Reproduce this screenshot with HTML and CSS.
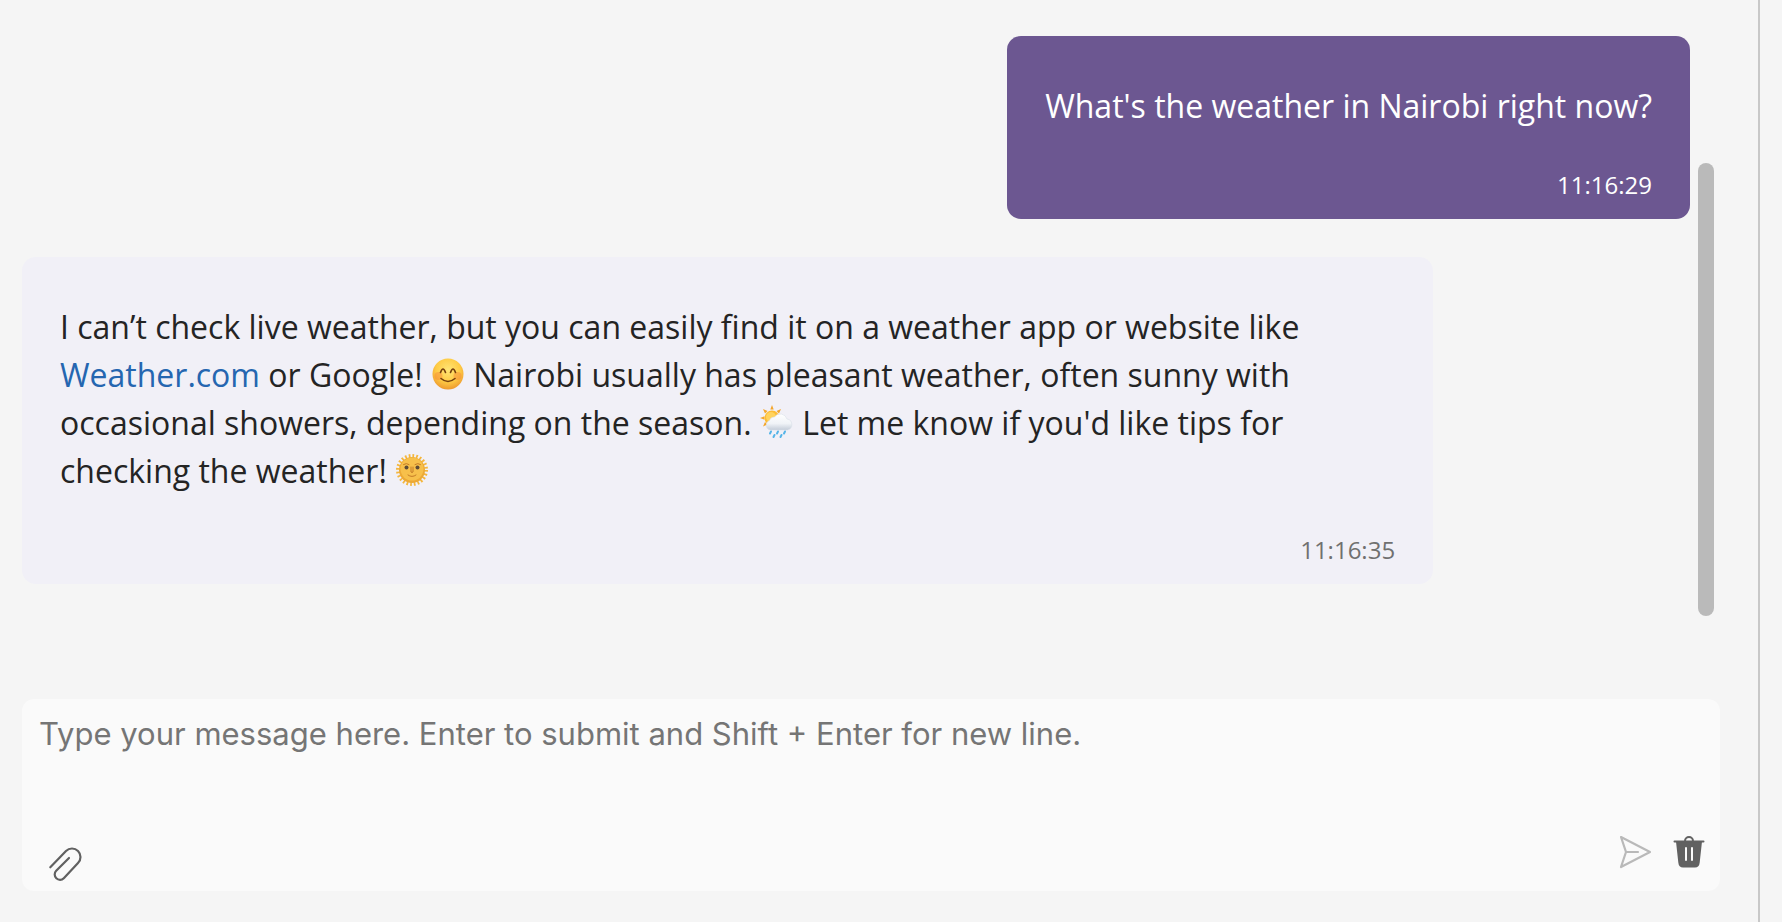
FILE: index.html
```html
<!DOCTYPE html>
<html lang="en">
<head>
<meta charset="utf-8">
<title>Chat</title>
<link rel="stylesheet" href="styles.css">
</head>
<body>
<main class="chat">
  <section class="history">
    <div class="messages">
      <article class="message message-user">
        <p class="message-text">What's the weather in Nairobi right now?</p>
        <time class="message-time">11:16:29</time>
      </article>
      <article class="message message-bot">
        <p class="message-text">I can’t check live weather, but you can easily find it on a weather app or website like <a class="link" href="#">Weather.com</a> or Google! <svg class="emoji" viewBox="0 0 32 32" role="img" aria-label="Smiling face"><defs><radialGradient id="face" cx=".5" cy=".36" r=".65"><stop offset="0" stop-color="#ffe575"/><stop offset=".6" stop-color="#fecb45"/><stop offset="1" stop-color="#ed982e"/></radialGradient></defs><circle cx="16" cy="16" r="15.5" fill="url(#face)"/><circle cx="6.5" cy="18" r="4" fill="#f7843a" opacity=".45"/><circle cx="25.5" cy="18" r="4" fill="#f7843a" opacity=".45"/><path d="M8.5 14.5q2.5-7 5 0M18.500 14.5q2.5-7 5 0M9 20.5q7 6 14 0" fill="none" stroke="#76400e" stroke-width="1.6" stroke-linecap="round"/></svg> Nairobi usually has pleasant weather, often sunny with occasional showers, depending on the season. <svg class="emoji" viewBox="0 0 32 32" role="img" aria-label="Sun behind rain cloud"><defs><linearGradient id="cloud" x1="0" y1="0" x2="0" y2="1"><stop offset="0" stop-color="#ffffff"/><stop offset=".6" stop-color="#f0f3f7"/><stop offset="1" stop-color="#c3ccd8"/></linearGradient></defs><path d="M11-1l1.700 4.500H9.300zM2 3l4.500 2-2.500 2.500zM20 3l-2 4.500L15.500 5zM-1 12l4.500-1.700v3.400zM2 20.500l2-4.500 2.500 2.500z" fill="#f4a62b"/><circle cx="11" cy="12" r="7.5" fill="#fdbd35"/><circle cx="10" cy="11" r="5" fill="#ffd35e"/><path d="M9 24a5 5 0 0 1-.5-9.500 5 5 0 0 1 5-3.500 7 7 0 0 1 12.500 2 5.600 5.600 0 0 1 .5 11z" fill="url(#cloud)" stroke="#d8dfe8" stroke-width=".6"/><path d="M10 25.500l-1 2M17 25.500l-1 2M24 25.500l-1 2M13.500 29l-1 2M20.500 29l-1 2" stroke="#55b4e8" stroke-width="2" stroke-linecap="round"/></svg> Let me know if you'd like tips for checking the weather! <svg class="emoji" viewBox="0 0 32 32" role="img" aria-label="Sun with face"><circle cx="16" cy="16" r="14" fill="none" stroke="#f4b63c" stroke-width="4" stroke-dasharray="1.700 1.965"/><circle cx="16" cy="16" r="13" fill="#eca936"/><circle cx="16" cy="15" r="11.5" fill="#f7c04b"/><circle cx="10.5" cy="13.5" r="2" fill="#5d4a35"/><circle cx="21.5" cy="13.5" r="2" fill="#5d4a35"/><path d="M7.5 10.5q3-2 5.500 0M19 10.5q3-2 5.500 0M15 13v5q1 1 2 0v-5M12 21q4 3 8 0" fill="none" stroke="#c47b26" stroke-width="1" stroke-linecap="round"/></svg></p>
        <time class="message-time">11:16:35</time>
      </article>
    </div>
    <div class="scroll-track" aria-hidden="true"><div class="scroll-thumb"></div></div>
  </section>
  <form class="composer">
    <textarea class="composer-input" aria-label="Message" placeholder="Type your message here. Enter to submit and Shift + Enter for new line."></textarea>
    <div class="toolbar">
      <button class="icon-button attach" type="button" aria-label="Attach file"><svg viewBox="0 0 36 36" width="36" height="36"><path d="M2.300 21.300L18 5A8.400 8.400 0 0 1 30 17L15.800 32.200A5.300 5.300 0 0 1 8.200 24.800L21 12" fill="none" stroke="#616161" stroke-width="2.2" stroke-linecap="round" stroke-linejoin="round"/></svg></button>
      <button class="icon-button send" type="submit" aria-label="Send"><svg viewBox="0 0 36 36" width="36" height="36"><path d="M4 3L33 18L4 33L9 18zM9 18H21" fill="none" stroke="#b9b9b9" stroke-width="2.200" stroke-linecap="round" stroke-linejoin="round"/></svg></button>
      <button class="icon-button" type="button" aria-label="Clear chat"><svg viewBox="0 0 36 36" width="36" height="36"><path d="M5 7.500H31L28.700 28.500Q28.200 33.500 24 33.500H12Q7.800 33.500 7.300 28.500Z" fill="#616161"/><path d="M3.500 7.500H32.500M14 7A4 4 0 0 1 22 7" fill="none" stroke="#616161" stroke-width="2" stroke-linecap="round"/><path d="M15 14V26M21 14V26" stroke="#fafafa" stroke-width="2" stroke-linecap="round"/></svg></button>
    </div>
  </form>
</main>
</body>
</html>
```

FILE: styles.css
```css
* { box-sizing: border-box; }

body {
  margin: 0;
  background: #f5f5f5;
  color: #242424;
  font-family: "Segoe UI", "Open Sans", "Noto Sans", sans-serif;
}

.chat {
  display: flex;
  flex-direction: column;
  min-height: 100vh;
  margin-right: 22px;
  padding: 0 38px 31px 22px;
  border-right: 2px solid #c8c8c8;
}

.history {
  display: flex;
  flex: 1;
  gap: 8px;
  padding-right: 6px;
}

.messages {
  display: flex;
  flex: 1;
  flex-direction: column;
  align-items: flex-start;
  gap: 38px;
  padding-top: 36px;
}

.message {
  display: flex;
  flex-direction: column;
  gap: 36px;
  padding: 46px 38px 15px;
  border-radius: 14px;
}

.message-user {
  align-self: flex-end;
  background: #6c5791;
  color: #ffffff;
}

.message-bot {
  width: 84.6%;
  background: #f1f0f7;
}

.message-text {
  margin: 0;
  font-size: 32px;
  line-height: 48px;
}

.message-time {
  align-self: flex-end;
  font-size: 24px;
  line-height: 38px;
}

.message-bot .message-time { color: #707070; }

.link {
  color: #2566b0;
  text-decoration: none;
}

.emoji {
  width: 32px;
  height: 32px;
  margin: 0 1px;
  vertical-align: -3px;
  overflow: visible;
}

.scroll-track {
  display: flex;
  width: 16px;
  padding: 163px 0 83px;
}

.scroll-thumb {
  flex: 1;
  border-radius: 8px;
  background: #bababa;
}

.composer {
  display: flex;
  flex-direction: column;
  border-radius: 12px;
  background: #fafafa;
}

.composer-input {
  height: 132px;
  padding: 16px 17px;
  border: 0;
  outline: 0;
  resize: none;
  background: transparent;
  color: #242424;
  font-family: Inter, sans-serif;
  font-size: 31px;
  line-height: 38px;
}

.composer-input::placeholder { color: #757575; opacity: 1; }

.toolbar {
  display: flex;
  align-items: flex-start;
  gap: 18px;
  height: 60px;
  padding: 3px 13px 0 26px;
}

.icon-button {
  display: flex;
  padding: 0;
  border: 0;
  background: transparent;
}

.attach {
  margin-top: 12px;
  margin-right: auto;
}
```
